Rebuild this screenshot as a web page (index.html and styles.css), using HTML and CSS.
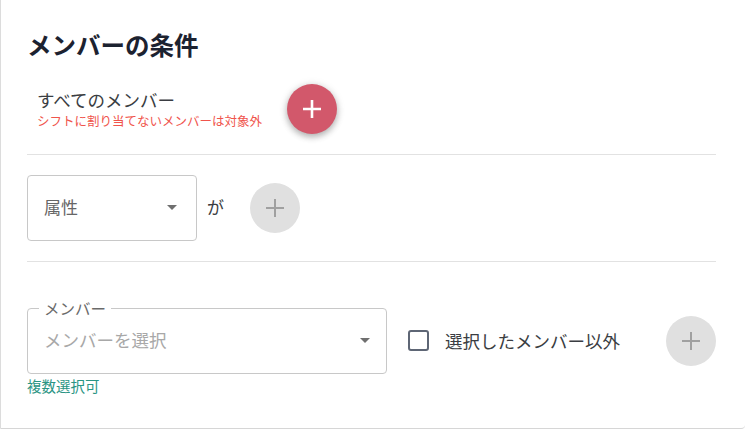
FILE: index.html
```html
<!DOCTYPE html>
<html lang="ja">
<head>
<meta charset="utf-8">
<link rel="stylesheet" href="styles.css">
</head>
<body>
<div class="dialog">
  <h2 class="title">メンバーの条件</h2>

  <div class="row row-all">
    <div class="all-text">
      <div class="all-main">すべてのメンバー</div>
      <div class="all-note">シフトに割り当てないメンバーは対象外</div>
    </div>
    <button class="fab fab-red" aria-label="追加">
      <svg width="18" height="18" viewBox="0 0 18 18"><path d="M9 1v16M1 9h16" stroke="#fff" stroke-width="2.6" stroke-linecap="square"/></svg>
    </button>
  </div>

  <div class="divider"></div>

  <div class="row row-attr">
    <div class="select select-attr">
      <span class="select-value">属性</span>
      <span class="arrow"></span>
    </div>
    <span class="ga">が</span>
    <button class="fab fab-gray" aria-label="追加">
      <svg width="20" height="20" viewBox="0 0 20 20"><path d="M10 1v18M1 10h18" stroke="#a0a0a0" stroke-width="2"/></svg>
    </button>
  </div>

  <div class="divider divider-2"></div>

  <div class="row row-member">
    <div class="field-wrap">
      <div class="select select-member">
        <span class="legend">メンバー</span>
        <span class="placeholder">メンバーを選択</span>
        <span class="arrow"></span>
      </div>
      <div class="helper">複数選択可</div>
    </div>
    <label class="check">
      <span class="box"></span>
      <span class="check-label">選択したメンバー以外</span>
    </label>
    <button class="fab fab-gray fab-end" aria-label="追加">
      <svg width="20" height="20" viewBox="0 0 20 20"><path d="M10 1v18M1 10h18" stroke="#a0a0a0" stroke-width="2"/></svg>
    </button>
  </div>
</div>
</body>
</html>
```

FILE: styles.css
```css
* { box-sizing: border-box; }
html, body { margin: 0; padding: 0; background: #fff; }
body {
  font-family: "Noto Sans CJK JP", "Noto Sans", sans-serif;
  color: #333;
}
.dialog {
  width: 745px;
  height: 429px;
  border-left: 1px solid #dcdcdc;
  border-bottom: 1px solid #d6d6d6;
  border-bottom-right-radius: 4px;
  padding: 30px 29px 0 26px;
  background: #fff;
  overflow: hidden;
}
.title {
  margin: 0;
  font-size: 24.5px;
  line-height: 30px;
  font-weight: 700;
  color: #1c2230;
}
.row { display: flex; align-items: center; }
.row-all {
  margin-top: 24px;
  height: 50px;
  padding-left: 10px;
  gap: 25px;
}
.all-main {
  font-size: 17.5px;
  line-height: 24px;
  color: #3a3d42;
}
.all-note {
  font-size: 12.5px;
  line-height: 18px;
  color: #f0544c;
}
.fab {
  width: 50px;
  height: 50px;
  border-radius: 50%;
  border: 0;
  padding: 0;
  display: flex;
  align-items: center;
  justify-content: center;
  flex: none;
}
.fab-red {
  background: #d2586b;
  box-shadow: 0 3px 6px rgba(0,0,0,0.25), 0 1px 10px rgba(0,0,0,0.12);
}
.fab-gray { background: #e0e0e0; }
.divider {
  height: 1px;
  background: #e2e2e2;
  margin-top: 20px;
}
.row-attr { margin-top: 20px; height: 66px; }
.select {
  position: relative;
  height: 66px;
  border: 1px solid #c8c8c8;
  border-radius: 4px;
  display: flex;
  align-items: center;
  padding-left: 16px;
  padding-bottom: 3px;
}
.select-attr { width: 170px; }
.select-value { font-size: 17px; color: #666; }
.arrow {
  position: absolute;
  right: 19px;
  top: 50%;
  margin-top: -3px;
  width: 0; height: 0;
  border-left: 5px solid transparent;
  border-right: 5px solid transparent;
  border-top: 5px solid #6f6f6f;
}
.ga { font-size: 17px; color: #3a3d42; margin-left: 10px; margin-right: 26px; padding-bottom: 3px; }
.divider-2 { margin-top: 20px; }
.row-member { margin-top: 46px; align-items: flex-start; }
.field-wrap { width: 360px; flex: none; }
.select-member { width: 360px; }
.legend {
  position: absolute;
  left: 11px;
  top: -11px;
  padding: 0 5px;
  background: #fff;
  font-size: 15.5px;
  line-height: 20px;
  color: #6a6a6a;
}
.placeholder { font-size: 17.5px; color: #a8a8a8; }
.select-member .arrow { right: 16px; }
.helper {
  margin-top: 3px;
  font-size: 14.5px;
  line-height: 18px;
  color: #2a9584;
}
.check {
  display: flex;
  align-items: center;
  height: 66px;
  margin-left: 21px;
  padding-bottom: 2px;
}
.box {
  width: 21px;
  height: 21px;
  border: 2.5px solid #5e6675;
  border-radius: 3px;
  margin-right: 16px;
}
.check-label { font-size: 17.5px; color: #3a3d42; }
.fab-end { margin-left: auto; margin-top: 8px; }
```
